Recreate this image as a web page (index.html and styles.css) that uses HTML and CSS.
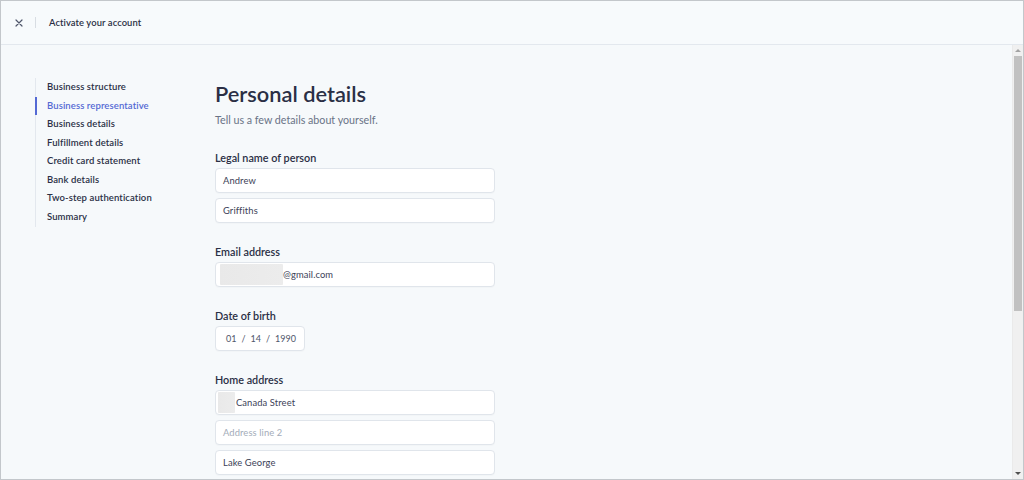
FILE: index.html
```html
<!DOCTYPE html>
<html lang="en">
<head>
<meta charset="utf-8">
<title>Activate your account</title>
<link rel="stylesheet" href="styles.css">
</head>
<body>
<div class="frame">
  <header class="topbar">
    <button class="close" aria-label="Close">
      <svg width="8" height="8" viewBox="0 0 8 8"><path d="M1 1L7 7M7 1L1 7" stroke="#4f566b" stroke-width="1.2" stroke-linecap="round"/></svg>
    </button>
    <span class="divider"></span>
    <span class="topbar-title">Activate your account</span>
  </header>
  <div class="content">
    <nav class="steps">
      <a class="step">Business structure</a>
      <a class="step active">Business representative</a>
      <a class="step">Business details</a>
      <a class="step">Fulfillment details</a>
      <a class="step">Credit card statement</a>
      <a class="step">Bank details</a>
      <a class="step">Two-step authentication</a>
      <a class="step">Summary</a>
    </nav>
    <main class="main">
      <h1 class="title">Personal details</h1>
      <p class="subtitle">Tell us a few details about yourself.</p>

      <section class="field first">
        <div class="label">Legal name of person</div>
        <div class="inputs">
          <div class="input"><span class="val">Andrew</span></div>
          <div class="input"><span class="val">Griffiths</span></div>
        </div>
      </section>

      <section class="field">
        <div class="label">Email address</div>
        <div class="inputs">
          <div class="input redacted-row"><span class="redact redact-email"></span><span class="val">@gmail.com</span></div>
        </div>
      </section>

      <section class="field">
        <div class="label">Date of birth</div>
        <div class="inputs">
          <div class="input date"><span class="dv">01</span><span class="sep">/</span><span class="dv">14</span><span class="sep">/</span><span class="dv">1990</span></div>
        </div>
      </section>

      <section class="field">
        <div class="label">Home address</div>
        <div class="inputs">
          <div class="input redacted-row addr"><span class="redact redact-addr"></span><span class="val">Canada Street</span></div>
          <div class="input"><span class="ph">Address line 2</span></div>
          <div class="input"><span class="val">Lake George</span></div>
          <div class="input"><span class="val">&nbsp;</span></div>
        </div>
      </section>
    </main>
  </div>
  <div class="scrollbar">
    <span class="arrow up"></span>
    <span class="thumb"></span>
    <span class="arrow down"></span>
  </div>
</div>
</body>
</html>
```

FILE: styles.css
```css
* { box-sizing: border-box; }
html, body { margin: 0; padding: 0; }
body {
  font-family: Lato, "Noto Sans", sans-serif;
  color: #3c4257;
  background: #ffffff;
}
.frame {
  position: relative;
  width: 1024px;
  height: 480px;
  border: 1px solid #c3c7cb;
  background: #f6f9fb;
  overflow: hidden;
  display: flex;
  flex-direction: column;
}
.topbar {
  height: 44px;
  flex: none;
  display: flex;
  align-items: center;
  border-bottom: 1px solid #e3e8ee;
  background: #f7fafc;
  padding-left: 13px;
}
.close {
  width: 10px;
  height: 10px;
  padding: 0;
  border: 0;
  background: none;
  display: flex;
  align-items: center;
  justify-content: center;
}
.divider {
  width: 1px;
  height: 11px;
  background: #d8dde3;
  margin-left: 11px;
  margin-right: 13px;
}
.topbar-title {
  font-size: 9.4px;
  font-weight: 600;
  color: #2a2f45;
  letter-spacing: 0.1px;
}
.content {
  flex: 1;
  display: flex;
  padding-left: 34px;
  overflow: hidden;
}
.steps {
  width: 180px;
  flex: none;
  display: flex;
  flex-direction: column;
  align-self: flex-start;
  margin-top: 33px;
  border-left: 1px solid #e3e8ee;
}
.step {
  display: block;
  font-size: 9.5px;
  line-height: 18.57px;
  padding-left: 10px;
  color: #2a2f45;
  font-weight: 600;
  margin-left: -1px;
  border-left: 2px solid transparent;
  letter-spacing: 0.1px;
}
.step.active {
  color: #5469d4;
  border-left-color: #5469d4;
}
.main {
  flex: none;
  width: 280px;
  padding-top: 35px;
}
.title {
  margin: 0;
  font-size: 21.8px;
  line-height: 28px;
  font-weight: 600;
  color: #2a2f45;
}
.subtitle {
  margin: 4px 0 0;
  font-size: 10.7px;
  line-height: 16px;
  color: #697386;
}
.field { margin-top: 21px; }
.field.first { margin-top: 22px; }
.label {
  font-size: 10.8px;
  line-height: 16px;
  font-weight: 600;
  color: #2a2f45;
  margin-bottom: 2px;
}
.inputs {
  display: flex;
  flex-direction: column;
  gap: 5px;
}
.input {
  height: 25px;
  background: #ffffff;
  border: 1px solid #e0e5eb;
  border-radius: 4px;
  box-shadow: 0 1px 1px rgba(0, 0, 0, 0.02);
  display: flex;
  align-items: center;
  padding-left: 7px;
  font-size: 9.4px;
  color: #3c4257;
  letter-spacing: 0.1px;
}
.ph { color: #a3acb9; }
.redacted-row { padding-left: 4px; }
.redact {
  align-self: stretch;
  margin: 1px 0;
  background: linear-gradient(90deg, #e9e9e9, #ececec);
  border-radius: 1px;
}
.redact-email { width: 63px; }
.redact-addr { width: 17px; margin-right: 1px; }
.addr { padding-left: 2px; }
.date {
  width: 90px;
  padding-left: 10px;
  font-size: 9px;
  letter-spacing: 0;
  color: #4f566b;
}
.sep { margin: 0 5px; }
.scrollbar {
  position: absolute;
  top: 44px;
  right: 0;
  bottom: 0;
  width: 11px;
  background: #f0f0f0;
  border-left: 1px solid #eaeaea;
}
.thumb {
  position: absolute;
  left: 1px;
  right: 1px;
  top: 11px;
  height: 255px;
  background: #c1c1c1;
}
.arrow {
  position: absolute;
  left: 2px;
  width: 0;
  height: 0;
  border-left: 3px solid transparent;
  border-right: 3px solid transparent;
}
.arrow.up { top: 4px; border-bottom: 3px solid #a3a3a3; }
.arrow.down { bottom: 4px; border-top: 3px solid #505050; }
```
